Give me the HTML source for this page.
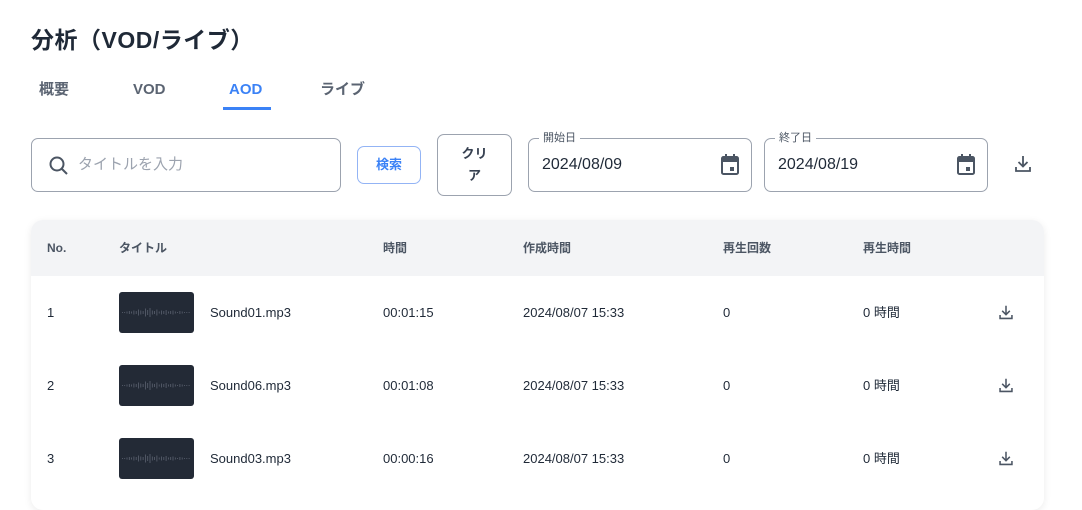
<!DOCTYPE html>
<html><head><meta charset="utf-8"><style>
*{box-sizing:border-box;margin:0;padding:0}
body{width:1082px;height:497px;overflow:hidden;background:#fff;font-family:"Liberation Sans","Noto Sans CJK JP",sans-serif;color:#1f2937;position:relative}
.a{position:absolute}
h1{position:absolute;left:31px;top:26px;font-size:23px;line-height:28px;font-weight:700;color:#1f2937;letter-spacing:.5px}
.tab{position:absolute;top:81px;font-size:15px;line-height:18px;height:18px;font-weight:700;color:#5b6472}
.box{position:absolute;border:1px solid #9ca3af;border-radius:7px;background:#fff}
.lbl{position:absolute;top:-8px;left:10px;background:#fff;padding:0 4px;font-size:11px;line-height:14px;color:#4b5563}
.card{position:absolute;left:31px;top:220px;width:1013px;height:290px;border-radius:12px;box-shadow:0 2px 8px rgba(0,0,0,.08);background:#fff;overflow:hidden}
.hd{position:absolute;left:0;top:0;width:100%;height:56px;background:#f3f4f6}
.th{position:absolute;top:20px;font-size:12px;line-height:16px;height:16px;font-weight:700;color:#4b5563}
.td{position:absolute;font-size:13px;line-height:16px;height:16px;color:#1f2937}
.th2{position:absolute;width:75px;height:41px;background:#232a36;border-radius:3px}
</style></head><body>
<h1>分析（VOD/ライブ）</h1>
<div class="tab" style="left:39px">概要</div>
<div class="tab" style="left:133px">VOD</div>
<div class="tab" style="left:229px;color:#3b82f6">AOD</div>
<div class="a" style="left:223px;top:107px;width:48px;height:3px;background:#3b82f6"></div>
<div class="tab" style="left:320px">ライブ</div>

<div class="box" style="left:31px;top:138px;width:310px;height:54px">
<svg class="a" style="left:16px;top:16px" width="22" height="22" viewBox="0 0 22 22"><circle cx="9" cy="9" r="6.5" fill="none" stroke="#4b5563" stroke-width="2"/><path d="M14 14l5 5" stroke="#4b5563" stroke-width="2"/></svg>
<div class="a" style="left:46px;top:17px;font-size:15px;line-height:18px;color:#9ca3af">タイトルを入力</div></div>
<div class="box" style="left:357px;top:146px;width:64px;height:38px;border-color:#93b4f5;display:flex;align-items:center;justify-content:center;font-size:13px;line-height:16px;font-weight:700;color:#3b82f6">検索</div>
<div class="box" style="left:437px;top:134px;width:75px;height:62px;text-align:center;font-size:13px;font-weight:700;color:#374151;line-height:22px;padding-top:8px">クリ<br>ア</div>

<div class="box" style="left:528px;top:138px;width:224px;height:54px"><div class="lbl">開始日</div>
<div class="a" style="left:13px;top:17px;font-size:16px;line-height:18px">2024/08/09</div>
<svg class="a" style="left:191px;top:15px" width="20" height="22" viewBox="0 0 20 22"><rect x="2" y="3" width="16" height="17" rx="1.5" fill="none" stroke="#4b5563" stroke-width="2"/><rect x="2" y="3" width="16" height="5" fill="#4b5563"/><rect x="5" y="0" width="2" height="4" fill="#4b5563"/><rect x="13" y="0" width="2" height="4" fill="#4b5563"/><rect x="10" y="13" width="4" height="4" fill="#4b5563"/></svg></div>
<div class="box" style="left:764px;top:138px;width:224px;height:54px"><div class="lbl">終了日</div>
<div class="a" style="left:13px;top:17px;font-size:16px;line-height:18px">2024/08/19</div>
<svg class="a" style="left:191px;top:15px" width="20" height="22" viewBox="0 0 20 22"><rect x="2" y="3" width="16" height="17" rx="1.5" fill="none" stroke="#4b5563" stroke-width="2"/><rect x="2" y="3" width="16" height="5" fill="#4b5563"/><rect x="5" y="0" width="2" height="4" fill="#4b5563"/><rect x="13" y="0" width="2" height="4" fill="#4b5563"/><rect x="10" y="13" width="4" height="4" fill="#4b5563"/></svg></div>
<svg class="a" style="left:1014px;top:154px" width="18" height="20" viewBox="0 0 18 20"><path d="M9 2v10M4.5 8l4.5 4.5L13.5 8M2 13v4h14v-4" fill="none" stroke="#4b5563" stroke-width="1.8"/></svg>

<div class="card"><div class="hd"></div>
<div class="th" style="left:16px">No.</div><div class="th" style="left:88px">タイトル</div><div class="th" style="left:352px">時間</div><div class="th" style="left:492px">作成時間</div><div class="th" style="left:692px">再生回数</div><div class="th" style="left:832px">再生時間</div>
</div>
<div id="rows"></div>
<script>
var d=[["1","Sound01.mp3","00:01:15"],["2","Sound06.mp3","00:01:08"],["3","Sound03.mp3","00:00:16"]];
var w='';for(var i=0;i<30;i++){var h=[.5,.5,1,1.5,1,2,1.5,3,2,1.5,4,2.5,4.5,2,1.5,3,1,2,1.5,2.5,1,1.5,2,1,.5,1.5,1,.5,.5,.5][i];w+='<rect x="'+(3+i*2.3)+'" y="'+(20.5-h)+'" width="0.8" height="'+(2*h)+'" fill="#5b6270"/>';}
var s='';d.forEach(function(r,k){var c=313+k*73;
s+='<div class="td" style="left:47px;top:'+(c-8)+'px">'+r[0]+'</div>';
s+='<div class="th2" style="left:119px;top:'+(c-21)+'px"><svg width="75" height="41">'+w+'</svg></div>';
s+='<div class="td" style="left:210px;top:'+(c-8)+'px">'+r[1]+'</div>';
s+='<div class="td" style="left:383px;top:'+(c-8)+'px">'+r[2]+'</div>';
s+='<div class="td" style="left:523px;top:'+(c-8)+'px">2024/08/07 15:33</div>';
s+='<div class="td" style="left:723px;top:'+(c-8)+'px">0</div>';
s+='<div class="td" style="left:863px;top:'+(c-8)+'px">0 時間</div>';
s+='<svg class="a" style="left:998px;top:'+(c-9)+'px" width="16" height="17" viewBox="0 0 18 20"><path d="M9 2v10M4.5 8l4.5 4.5L13.5 8M2 13v4h14v-4" fill="none" stroke="#4b5563" stroke-width="1.8"/></svg>';});
document.getElementById('rows').innerHTML=s;
</script>
</body></html>
